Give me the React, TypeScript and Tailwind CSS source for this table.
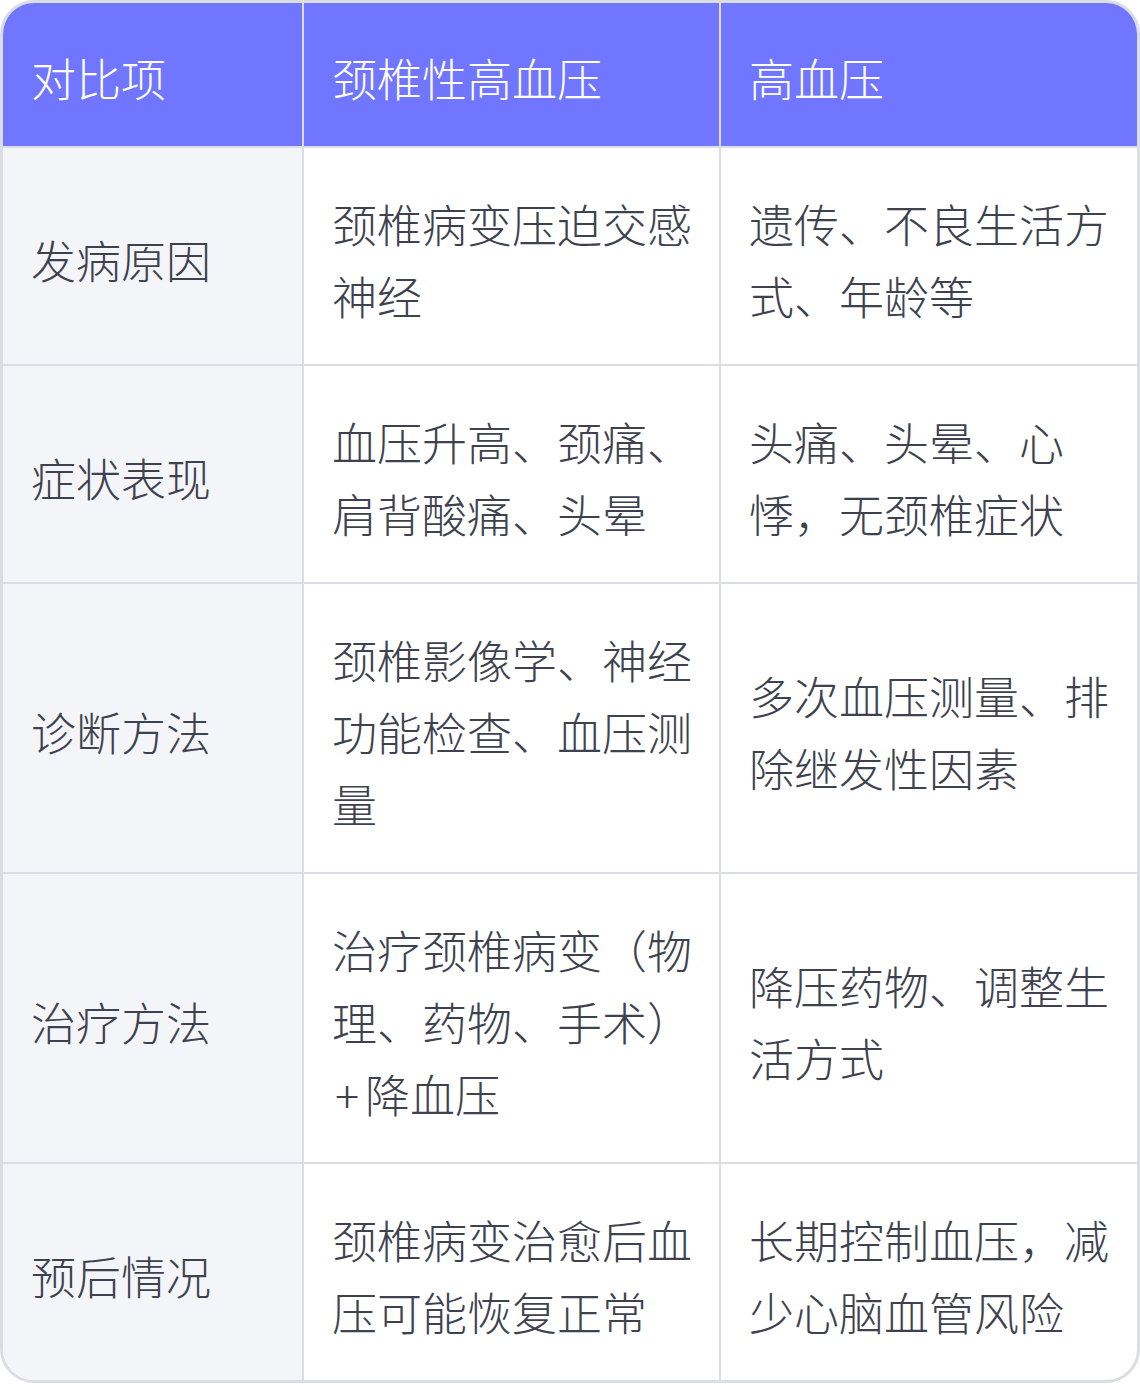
const header = ["对比项", "颈椎性高血压", "高血压"];

const rows: [string, React.ReactNode, string][] = [
  ["发病原因", "颈椎病变压迫交感神经", "遗传、不良生活方式、年龄等"],
  ["症状表现", "血压升高、颈痛、肩背酸痛、头晕", "头痛、头晕、心悸，无颈椎症状"],
  ["诊断方法", "颈椎影像学、神经功能检查、血压测量", "多次血压测量、排除继发性因素"],
  [
    "治疗方法",
    <>
      治疗颈椎病变（物理、药物、手术）
      <span className="ml-[3px] mr-[6px]">+</span>降血压
    </>,
    "降压药物、调整生活方式",
  ],
  ["预后情况", "颈椎病变治愈后血压可能恢复正常", "长期控制血压，减少心脑血管风险"],
];

const App = () => {
  return (
    <div
      className="w-[1140px] bg-white text-[45px] leading-[72px] font-light"
      style={{ fontFamily: '"Noto Sans CJK SC", "Noto Sans", sans-serif' }}
    >
      <div className="overflow-hidden rounded-[34px] border-[3px] border-[#dcdde2]">
        <div className="grid grid-cols-[301px_417px_416px]">
          {header.map((h, i) => (
            <div
              key={h}
              className={`bg-[#7076ff] px-[28px] pt-[39px] pb-[32px] text-white border-b-2 border-[#dcdde2] ${
                i < 2 ? "border-r-2" : ""
              }`}
            >
              {h}
            </div>
          ))}
          {rows.map((r, ri) => (
            <Row key={r[0]} cells={r} last={ri === rows.length - 1} />
          ))}
        </div>
      </div>
    </div>
  );
};

const Row = ({ cells, last }: { cells: [string, React.ReactNode, string]; last: boolean }) => {
  const bottom = last ? "" : "border-b-2";
  return (
    <>
      <div
        className={`flex items-center bg-[#f4f5f9] px-[28px] pt-[40px] pb-[32px] text-[#3e424e] border-r-2 border-[#dcdde2] ${bottom}`}
      >
        {cells[0]}
      </div>
      <div
        className={`flex items-center pl-[28px] pr-[24px] pt-[40px] pb-[32px] text-[#3e424e] border-r-2 border-[#dcdde2] ${bottom}`}
      >
        <span>{cells[1]}</span>
      </div>
      <div className={`flex items-center pl-[28px] pr-[20px] pt-[40px] pb-[32px] text-[#3e424e] border-[#dcdde2] ${bottom}`}>
        <span>{cells[2]}</span>
      </div>
    </>
  );
};

export default App;
